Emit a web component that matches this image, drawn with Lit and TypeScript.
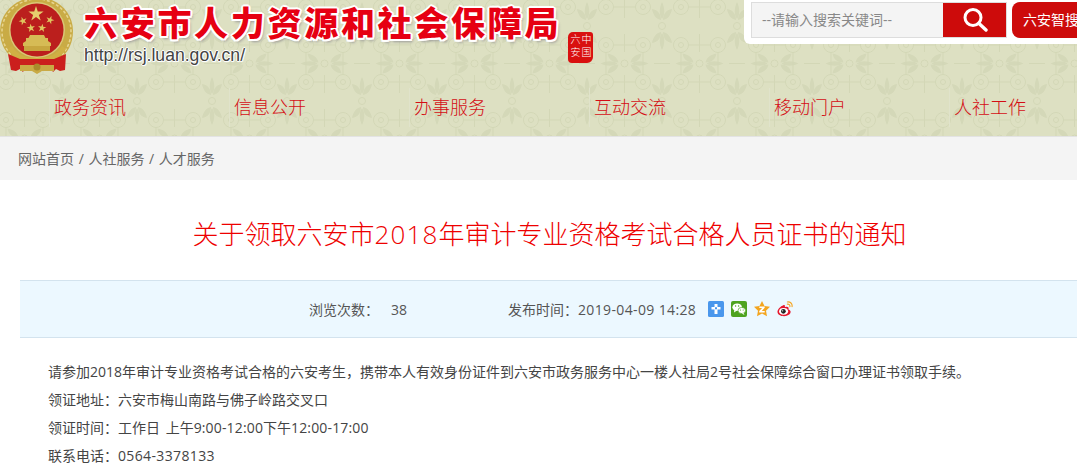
import { LitElement, html, css, svg, unsafeCSS } from "lit";
import { customElement } from "lit/decorators.js";

const use = (x: number, y: number, r: number) =>
  `<use href='#L' transform='translate(${x} ${y}) rotate(${r})'/>`;
const rings = [
  [19, 19], [56, 19], [19, 56], [56, 56],
]
  .map(([x, y]) => `<circle cx='${x}' cy='${y}' r='7.5'/><circle cx='${x}' cy='${y}' r='2.5'/>`)
  .join("");
const tile = `<svg xmlns='http://www.w3.org/2000/svg' width='75' height='75' viewBox='0 0 75 75'><defs><g id='L'><path d='M7 0c4-3 11-3 17 0-6 3-13 3-17 0z'/><path d='M6-1c1-5 5-8 11-9-1 6-5 9-11 9zM6 1c1 5 5 8 11 9-1-6-5-9-11-9z'/></g></defs><g fill='#d4d8b8'>${use(37.5, 37.5, 0)}${use(37.5, 37.5, 180)}${use(0, 0, 90)}${use(75, 0, 90)}${use(0, 75, -90)}${use(75, 75, -90)}</g><g fill='none' stroke='#d3d7b6' stroke-width='1'>${rings}<circle cx='37.5' cy='37.5' r='3.500'/><circle cx='0' cy='0' r='3.500'/><circle cx='75' cy='0' r='3.500'/><circle cx='0' cy='75' r='3.500'/><circle cx='75' cy='75' r='3.500'/><path d='M26 19h23M26 56h23M19 26v23M56 26v23M37.5 8v18M37.5 49v18M0 37.5h8M67 37.5h8'/></g></svg>`;
const tileUrl = unsafeCSS(`url("data:image/svg+xml,${encodeURIComponent(tile)}")`);

function star(cx: number, cy: number, r: number, rot = 0) {
  const pts: string[] = [];
  for (let i = 0; i < 10; i++) {
    const rad = i % 2 ? r * 0.38 : r;
    const a = ((-90 + rot + i * 36) * Math.PI) / 180;
    pts.push(`${(cx + rad * Math.cos(a)).toFixed(2)},${(cy + rad * Math.sin(a)).toFixed(2)}`);
  }
  return pts.join(" ");
}

const emblem = html`<svg class="emblem" width="74" height="78" viewBox="0 0 74 78">
  <path d="M37 -3C56 -3 73 11 73 31c0 13-6 23-14 29l-44 0C6 54 0 44 0 31 0 11 18 -3 37 -3z" fill="#c9ab45"></path>
  <path d="M37 -1C54 -1 71 12 71 31c0 10-4 19-10 25" fill="none" stroke="#e7d591" stroke-width="1.500" stroke-dasharray="3 2"></path>
  <path d="M37 -1C20 -1 2 12 2 31c0 10 4 19 10 25" fill="none" stroke="#e7d591" stroke-width="1.500" stroke-dasharray="3 2"></path>
  <circle cx="37" cy="30" r="28" fill="#d9c777"></circle>
  <circle cx="37" cy="30" r="26.500" fill="#bb1f1d"></circle>
  ${svg`<polygon points="${star(36, 14, 8)}" fill="#e6cf6e"></polygon>
  <polygon points="${star(23, 21, 4.4, -20)}" fill="#e0c75f"></polygon>
  <polygon points="${star(31, 28, 4.4, -8)}" fill="#e0c75f"></polygon>
  <polygon points="${star(42, 28, 4.4, 8)}" fill="#e0c75f"></polygon>
  <polygon points="${star(50, 20, 4.4, 20)}" fill="#e0c75f"></polygon>`}
  <path d="M30 35h14l1.500 3H48v3l3 2v3H23v-3l3-2v-3h2.500z" fill="#d6bb55"></path>
  <path d="M24 46h26v5H24z" fill="#c7a63f"></path>
  <path d="M12 46c5 9 14 12 25 12s20-3 25-12l4 3c-6 11-17 15-29 15S14 60 8 49z" fill="#d0b044"></path>
  <path d="M8 54l12 5 34 0 12-5 -1 16-5 1-4-2-3 3-4-7H27l-4 7-3-3-4 2-5-1z" fill="#cb1f1d"></path>
  <path d="M20 65h34v6H42l-5 3-5-3H20z" fill="#c9aa45"></path>
  <circle cx="37" cy="67" r="3.500" fill="#a98a2c"></circle>
</svg>`;

@customElement("app-root")
export class AppRoot extends LitElement {
  static styles = css`
    :host {
      display: block;
      width: 1077px;
      height: 472px;
      overflow: hidden;
      background: #fff;
      font-family: "Open Sans", "Noto Sans CJK SC", sans-serif;
      font-size: 14px;
      color: #444;
    }
    .num {
      letter-spacing: 0.36px;
    }
    .header {
      height: 136px;
      background-color: #dde0c2;
      background-image: ${tileUrl};
      background-position: -13.5px 25.5px;
      border-bottom: 1px solid #e3e3e3;
      display: flex;
      flex-direction: column;
    }
    .top {
      height: 88px;
      display: flex;
      align-items: flex-start;
    }
    .emblem {
      flex: none;
      margin: 0 10px 0 0;
    }
    .brand {
      width: 484px;
      flex: none;
      display: flex;
      flex-direction: column;
    }
    .sitename {
      font-family: "Noto Sans CJK SC", sans-serif;
      font-weight: 900;
      font-size: 34px;
      line-height: 38px;
      letter-spacing: 2.7px;
      color: #e60012;
      white-space: nowrap;
      margin-top: 3px;
      text-shadow: 2px 0 0 #fff, -2px 0 0 #fff, 0 2px 0 #fff, 0 -2px 0 #fff,
        1.5px 1.5px 0 #fff, -1.5px 1.5px 0 #fff, 1.5px -1.5px 0 #fff,
        -1.5px -1.5px 0 #fff, 2px 3px 3px #999;
    }
    .url {
      font-family: "Liberation Sans", sans-serif;
      font-size: 17.6px;
      line-height: 20px;
      color: #444;
      margin-top: 4px;
      text-shadow: 1px 0 0 #fff, -1px 0 0 #fff, 0 1px 0 #fff, 0 -1px 0 #fff,
        1px 1px 1px #fff;
    }
    .seal {
      flex: none;
      width: 25px;
      height: 31px;
      box-sizing: border-box;
      padding: 2px 1px 0 0;
      margin: 32px 0 0 0;
      background: #d9100f;
      border-radius: 5px 3px 6px 4px;
      color: #fff;
      writing-mode: vertical-rl;
      font-family: "Noto Sans CJK SC", sans-serif;
      font-size: 10px;
      line-height: 11px;
      letter-spacing: 3px;
      font-weight: 300;
      white-space: pre-line;
    }
    .search {
      margin-left: auto;
      width: 333px;
      height: 44px;
      flex: none;
      box-sizing: border-box;
      padding: 2px 0 0 7px;
      background: #fff;
      border-radius: 0 0 0 6px;
      display: flex;
      align-items: flex-start;
      overflow: hidden;
    }
    .field {
      width: 192px;
      height: 36px;
      box-sizing: border-box;
      background: #f4f4f4;
      border: 1px solid #ddd;
      border-right: none;
      color: #888;
      font-size: 14px;
      line-height: 33px;
      padding-left: 10px;
      flex: none;
    }
    .go {
      width: 64px;
      height: 36px;
      flex: none;
      box-sizing: border-box;
      background: #cd0b0b;
      border: 1px solid #ddd;
      border-left: none;
      display: flex;
      align-items: center;
      justify-content: center;
    }
    .zhisou {
      margin-left: 5px;
      width: 100px;
      height: 36px;
      flex: none;
      box-sizing: border-box;
      padding-left: 11px;
      background: #cd0b0b;
      border-radius: 8px;
      color: #fff;
      font-size: 14px;
      line-height: 35px;
      white-space: nowrap;
    }
    .nav {
      display: flex;
      padding-left: 49px;
    }
    .nav a {
      width: 180px;
      height: 39px;
      box-sizing: border-box;
      flex: none;
      border-left: 1px solid #e0e3cb;
      padding-left: 4px;
      font-size: 18px;
      font-weight: 300;
      line-height: 39px;
      color: #d40d14;
      white-space: nowrap;
    }
    .crumb {
      height: 43px;
      background: #f4f4f4;
      padding-left: 18px;
      font-size: 14px;
      line-height: 44px;
      color: #666;
    }
    .sep {
      margin: 0 1px;
    }
    .title {
      height: 100px;
      margin: 0;
      padding: 6px 0 0 22px;
      box-sizing: border-box;
      display: flex;
      align-items: center;
      justify-content: center;
      font-size: 26px;
      font-weight: 300;
      color: #ee0000;
      white-space: pre;
    }
    .title .num {
      letter-spacing: 1.1px;
    }
    .meta {
      margin-left: 20px;
      height: 58px;
      box-sizing: border-box;
      background: #ecf8ff;
      border-top: 1px solid #d3e3ee;
      border-bottom: 1px solid #d3e3ee;
      padding-left: 289px;
      display: flex;
      align-items: center;
      color: #555;
      white-space: nowrap;
    }
    .views {
      margin-left: 12px;
      width: 117px;
    }
    .date {
      width: 130px;
    }
    .share {
      display: flex;
      align-items: center;
      gap: 7px;
    }
    .share svg {
      display: block;
      flex: none;
    }
    .body {
      margin: 20px 0 0 48px;
      line-height: 28px;
      color: #444;
      white-space: nowrap;
    }
    .body p {
      margin: 0;
    }
    .hours {
      word-spacing: 2px;
    }
    .hours .num {
      letter-spacing: 0.15px;
    }
  `;

  render() {
    const navs = ["政务资讯", "信息公开", "办事服务", "互动交流", "移动门户", "人社工作"];
    return html`
      <div class="header">
        <div class="top">
          ${emblem}
          <div class="brand">
            <div class="sitename">六安市人力资源和社会保障局</div>
            <div class="url">http://rsj.luan.gov.cn/</div>
          </div>
          <div class="seal">中国\n六安</div>
          <div class="search">
            <div class="field">--请输入搜索关键词--</div>
            <div class="go">
              <svg width="26" height="26" viewBox="0 0 26 26" fill="none" stroke="#fff">
                <circle cx="11" cy="10.5" r="8" stroke-width="3"></circle>
                <path d="M17 16.5l7 6.5" stroke-width="3.4" stroke-linecap="round"></path>
              </svg>
            </div>
            <div class="zhisou">六安智搜</div>
          </div>
        </div>
        <nav class="nav">${navs.map((n) => html`<a>${n}</a>`)}</nav>
      </div>
      <div class="crumb">网站首页<span class="sep"> / </span>人社服务<span class="sep"> / </span>人才服务</div>
      <h1 class="title"><span>关于领取六安市<span class="num">2018</span>年审计专业资格考试合格人员证书的通知</span></h1>
      <div class="meta">
        <span>浏览次数：</span><span class="views">38</span>
        <span>发布时间：</span><span class="date num">2019-04-09 14:28</span>
        <div class="share">
          <svg width="16" height="16" viewBox="0 0 16 16">
            <rect width="16" height="16" rx="1.500" fill="#4a97ec"></rect>
            <path d="M6.500 3h3v3h3v2.500h-3V13h-3V8.500h-3V6h3z" fill="#fff"></path>
            <path d="M7 6.200h2v2H7z" fill="#4a97ec"></path>
          </svg>
          <svg width="16" height="16" viewBox="0 0 16 16">
            <rect width="16" height="16" rx="2" fill="#4da31f"></rect>
            <ellipse cx="6.200" cy="6.200" rx="4.800" ry="3.800" fill="#fff"></ellipse>
            <ellipse cx="10.800" cy="9.500" rx="3.800" ry="3.100" fill="#fff" stroke="#4da31f" stroke-width=".7"></ellipse>
            <path d="M3.300 9L3 11.500l3-2zM12.500 12l1 2-2.800-1.500z" fill="#fff"></path>
            <circle cx="4.600" cy="5" r=".7" fill="#4da31f"></circle>
            <circle cx="7.600" cy="5" r=".7" fill="#4da31f"></circle>
            <circle cx="9.500" cy="9" r=".6" fill="#4da31f"></circle>
            <circle cx="12.200" cy="9" r=".6" fill="#4da31f"></circle>
          </svg>
          <svg width="16" height="16" viewBox="0 0 16 16">
            <path d="M8 0l2.500 5 5.500.8-4 3.900 1 5.500-5-2.700-5 2.700 1-5.500-4-3.900 5.500-.8z" fill="#f3a51f"></path>
            <path d="M5.300 5.500h5.400v1.300L7.800 10h2.900v1.400H5.200v-1.300l2.900-3.200H5.300z" fill="#fff"></path>
          </svg>
          <svg width="16" height="16" viewBox="0 0 17 17">
            <path d="M7 4.500C3.500 5.500.5 9 .5 11.500c0 3 3.500 4.700 7 4.700 4 0 7-2.300 7-4.700 0-1.600-1.400-2.300-2.400-2.600.6-1.500.3-2.900-2-2.900-.8 0-1.600.3-1.800.4.500-1.400.2-2.400-1.800-1.900z" fill="#e6162d"></path>
            <ellipse cx="7" cy="11" rx="4.800" ry="3.600" fill="#fff"></ellipse>
            <circle cx="6.800" cy="11" r="2.500" fill="#222"></circle>
            <circle cx="6" cy="10.400" r=".7" fill="#fff"></circle>
            <path d="M11 1c3-.6 5.600 2 5 5M11 3.300c1.600-.3 3 1.100 2.700 2.700" fill="none" stroke="#f5a623" stroke-width="1.200" stroke-linecap="round"></path>
          </svg>
        </div>
      </div>
      <div class="body">
        <p>请参加2018年审计专业资格考试合格的六安考生，携带本人有效身份证件到六安市政务服务中心一楼人社局2号社会保障综合窗口办理证书领取手续。</p>
        <p>领证地址：六安市梅山南路与佛子岭路交叉口</p>
        <p class="hours">领证时间：工作日 上午<span class="num">9:00-12:00</span>下午<span class="num">12:00-17:00</span></p>
        <p>联系电话：<span class="num">0564-3378133</span></p>
      </div>
    `;
  }
}
